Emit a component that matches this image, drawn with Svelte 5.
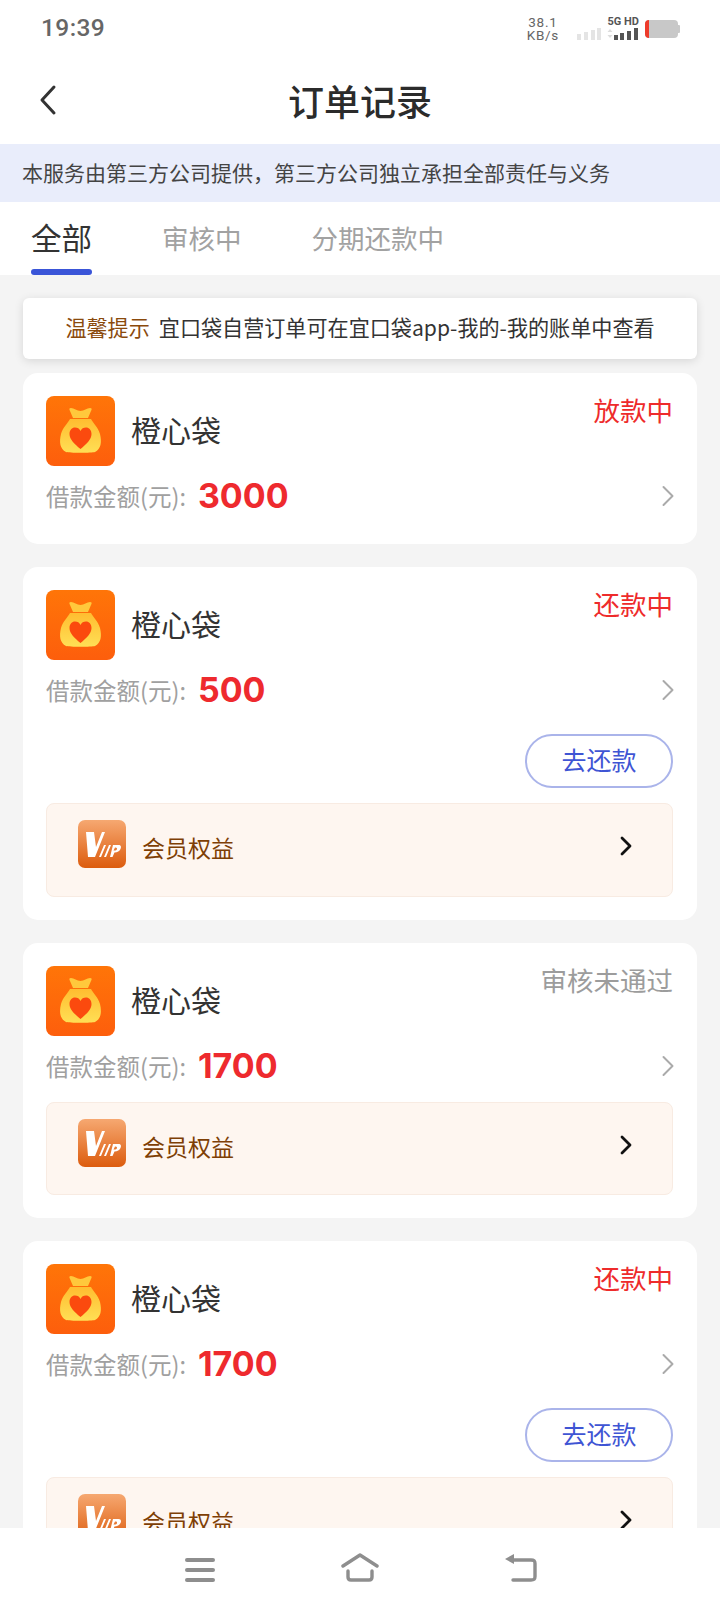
<script>
  const orders = [
    { amount: '3000', status: '放款中', statusClass: 'red', repay: false, vip: false },
    { amount: '500', status: '还款中', statusClass: 'red', repay: true, vip: true },
    { amount: '1700', status: '审核未通过', statusClass: 'gray', repay: false, vip: true },
    { amount: '1700', status: '还款中', statusClass: 'red', repay: true, vip: true }
  ];
</script>

<div class="page">
  <div class="statusbar">
    <span class="time">19:39</span>
    <div class="sys">
      <div class="speed"><span>38.1</span><span>KB/s</span></div>
      <svg class="signal" width="24" height="12" viewBox="0 0 24 12"><g fill="#e4e4e4"><rect x="0" y="6" width="4" height="6" /><rect x="7" y="4" width="4" height="8" /><rect x="14" y="2" width="4" height="10" /><rect x="20" y="0" width="4" height="12" /></g></svg>
      <div class="net">
        <span class="hd">5G HD</span>
        <svg width="32" height="12" viewBox="0 0 32 12"><g fill="#ddd"><path d="M3 1l2.500 3h-5zM3 10L.5 7h5z" /></g><g fill="#555"><rect x="7" y="7" width="4" height="5" /><rect x="13" y="5" width="4" height="7" /><rect x="20" y="3" width="4" height="9" /><rect x="27" y="0" width="4" height="12" /></g></svg>
      </div>
      <svg class="battery" width="35" height="18" viewBox="0 0 35 18"><rect x="0" y="0" width="33" height="18" rx="4" fill="#c8c8c8" /><path d="M4 0C1.500 0 0 1.500 0 4v10c0 2.500 1.500 4 4 4V0z" fill="#ee3b2b" /><rect x="32" y="5" width="3" height="8" rx="1" fill="#c8c8c8" /></svg>
    </div>
  </div>

  <header class="topbar">
    <svg class="back" width="20" height="32" viewBox="0 0 20 32"><path d="M16 3L4 16l12 13" fill="none" stroke="#333" stroke-width="3" stroke-linecap="round" stroke-linejoin="round" /></svg>
    <h1>订单记录</h1>
  </header>

  <div class="notice">本服务由第三方公司提供，第三方公司独立承担全部责任与义务</div>

  <nav class="tabs">
    <div class="tab active">全部</div>
    <div class="tab">审核中</div>
    <div class="tab">分期还款中</div>
  </nav>

  <main class="list">
    <div class="tip"><span class="tip-label">温馨提示</span>宜口袋自营订单可在宜口袋app-我的-我的账单中查看</div>

    {#each orders as order, i}
      <section class="card" class:first={i === 0}>
        <div class="card-head">
          <svg class="logo" width="69" height="70" viewBox="0 0 69 70">
            <defs>
              <linearGradient id="bg{i}" x1="0" y1="0" x2="0" y2="1"><stop offset="0" stop-color="#ff7508" /><stop offset="1" stop-color="#fd5e0c" /></linearGradient>
              <linearGradient id="bag{i}" x1="0" y1="0" x2="0" y2="1"><stop offset="0" stop-color="#ffbd30" /><stop offset="1" stop-color="#ffdf55" /></linearGradient>
            </defs>
            <rect width="69" height="70" rx="8" fill="url(#bg{i})" />
            <path d="M25 12c3 0 6 3 9.500 3s6.500-3 9.500-3c2 0 2 1 1 3l-3 7H27l-3-7c-1-2-1-3 1-3z" fill="#ffc83c" />
            <path d="M24 23h21c2 4 7 8 9 15 2 8 1 15-5 18-3 1-26 1-29 0-6-3-7-10-5-18 2-7 7-11 9-15z" fill="url(#bag{i})" />
            <path d="M34.500 53c-6-5-11-9.500-11-15 0-4 2.500-6.500 5.500-6.500 2.500 0 4.500 1 5.500 3.500 1-2.500 3-3.500 5.500-3.500 3 0 5.500 2.500 5.500 6.500 0 5.500-5 10-11 15z" fill="#fb4a0e" />
          </svg>
          <span class="name">橙心袋</span>
          <span class="status {order.statusClass}">{order.status}</span>
        </div>

        <div class="amount-row">
          <span class="label">借款金额(元):</span>
          <span class="amount">{order.amount}</span>
          <svg class="chev" width="14" height="22" viewBox="0 0 14 22"><path d="M2.500 2l9 9-9 9" fill="none" stroke="#aaa" stroke-width="2" stroke-linecap="round" stroke-linejoin="round" /></svg>
        </div>

        {#if order.repay}
          <div class="actions"><button class="repay">去还款</button></div>
        {/if}

        {#if order.vip}
          <div class="vip" class:tight={!order.repay}>
            <svg class="vip-icon" width="48" height="48" viewBox="0 0 48 48">
              <defs>
                <linearGradient id="vip{i}" x1="0" y1="0" x2="0" y2="1"><stop offset="0" stop-color="#f6a871" /><stop offset="1" stop-color="#dc5c0e" /></linearGradient>
              </defs>
              <rect width="48" height="48" rx="7" fill="url(#vip{i})" />
              <path d="M8 12h8l2 15 6-15h3L17 37h-7z" fill="#fff" />
              <path d="M26 25h2l-5 12h-2zM31 25h2l-5 12h-2z" fill="#fff" />
              <path d="M35 25h5.500c2.500 0 3 2 2 4s-3 3.500-6 3.500L34.500 37h-2.500zM37 27.500l-1.500 3h2c1.500 0 2.500-3 0-3z" fill="#fff" fill-rule="evenodd" />
            </svg>
            <span class="vip-text">会员权益</span>
            <svg class="vip-chev" width="12" height="20" viewBox="0 0 12 20"><path d="M2 2l8 8-8 8" fill="none" stroke="#111" stroke-width="2.800" stroke-linecap="round" stroke-linejoin="round" /></svg>
          </div>
        {/if}
      </section>
    {/each}
  </main>

  <footer class="navbar">
    <svg width="30" height="24" viewBox="0 0 30 24"><g fill="#8e8e8e"><rect x="0" y="0" width="30" height="4" rx="2" /><rect x="0" y="10" width="30" height="4" rx="2" /><rect x="0" y="20" width="30" height="4" rx="2" /></g></svg>
    <svg width="38" height="29" viewBox="0 0 38 29"><path d="M2 13L19 2l17 11M7 18v6c0 2 1 3 3 3h18c2 0 3-1 3-3v-6" fill="none" stroke="#8e8e8e" stroke-width="3.400" stroke-linecap="round" stroke-linejoin="round" /></svg>
    <svg width="32" height="28" viewBox="0 0 32 28"><path d="M8 6h18c3 0 4 1 4 3.500v13c0 2.500-1 3.500-4 3.500H8" fill="none" stroke="#8e8e8e" stroke-width="3.400" stroke-linecap="round" /><path d="M0 5l9-5v10z" fill="#8e8e8e" /></svg>
  </footer>
</div>

<style>
  :global(body) {
    margin: 0;
    background: #fff;
  }

  .page {
    width: 720px;
    height: 1612px;
    display: flex;
    flex-direction: column;
    overflow: hidden;
    font-family: "Noto Sans CJK SC", "Noto Sans", sans-serif;
    background: #f4f4f4;
  }

  .statusbar {
    height: 56px;
    flex: none;
    background: #fff;
    display: flex;
    justify-content: space-between;
    padding: 0 40px 0 41px;
    box-sizing: border-box;
  }

  .time {
    font: 500 24.500px/55px Roboto, sans-serif;
    color: #666;
    letter-spacing: 0.4px;
  }

  .sys {
    display: flex;
    align-items: flex-start;
    padding-top: 16px;
    color: #666;
  }

  .speed {
    display: flex;
    flex-direction: column;
    align-items: center;
    font: 400 13.500px/13px Roboto, sans-serif;
    letter-spacing: 0.7px;
    margin-right: 18px;
  }

  .signal {
    margin-top: 12px;
    margin-right: 6px;
  }

  .net {
    display: flex;
    flex-direction: column;
    align-items: flex-end;
    margin-right: 6px;
  }

  .hd {
    font: 700 11px/12px Roboto, sans-serif;
    color: #555;
  }

  .battery {
    margin-top: 4px;
  }

  .topbar {
    height: 88px;
    flex: none;
    background: #fff;
    position: relative;
    display: flex;
    align-items: center;
    justify-content: center;
  }

  .back {
    position: absolute;
    left: 38px;
    top: 28px;
  }

  .topbar h1 {
    margin: 0;
    font-size: 36px;
    font-weight: 500;
    color: #2b2b2b;
    line-height: 86px;
  }

  .notice {
    height: 58px;
    flex: none;
    background: #e9edfb;
    color: #444;
    font-size: 21px;
    line-height: 56px;
    padding-left: 22px;
  }

  .tabs {
    height: 73px;
    flex: none;
    background: #fff;
    display: flex;
    padding-left: 31px;
    gap: 70px;
  }

  .tab {
    position: relative;
    font-size: 26.500px;
    line-height: 72px;
    color: #a2a2a2;
  }

  .tab.active {
    font-size: 30.500px;
    color: #333;
    line-height: 70px;
  }

  .tab.active::after {
    content: "";
    position: absolute;
    left: 0;
    right: 0;
    bottom: 0;
    height: 6px;
    border-radius: 3px;
    background: #3a55d8;
  }

  .list {
    flex: 1;
    min-height: 0;
    overflow: hidden;
    padding: 23px 23px 0;
  }

  .tip {
    height: 61px;
    background: #fff;
    border-radius: 6px;
    box-shadow: 0 2px 10px rgba(0, 0, 0, 0.12);
    text-align: center;
    font-size: 21.100px;
    line-height: 59px;
    color: #333;
    margin-bottom: 14px;
  }

  .tip-label {
    color: #8a4a0c;
    margin-right: 9px;
  }

  .card {
    background: #fff;
    border-radius: 15px;
    padding: 23px 24px 23px 23px;
    margin-bottom: 23px;
  }

  .card.first {
    padding-bottom: 24px;
  }

  .card-head {
    display: flex;
    align-items: flex-start;
    height: 70px;
  }

  .logo {
    flex: none;
  }

  .name {
    font-size: 30px;
    line-height: 66px;
    color: #333;
    margin-left: 16px;
  }

  .status {
    margin-left: auto;
    font-size: 26.500px;
    line-height: 32px;
    margin-top: -2px;
  }

  .red {
    color: #ee2b2b;
  }

  .gray {
    color: #9c9c9c;
  }

  .amount-row {
    display: flex;
    align-items: center;
    height: 48px;
    margin-top: 6px;
  }

  .label {
    font-size: 23.500px;
    color: #a0a0a0;
  }

  .amount {
    font: 700 34px/48px Inter, sans-serif;
    color: #ee2a2e;
    margin-left: 12px;
  }

  .chev {
    margin-left: auto;
    margin-right: -2px;
  }

  .actions {
    display: flex;
    justify-content: flex-end;
    margin-top: 20px;
  }

  .repay {
    width: 148px;
    height: 54px;
    border: 2px solid #aab4ea;
    border-radius: 27px;
    background: #fff;
    color: #3f55d4;
    font: 400 25px/46px "Noto Sans CJK SC", sans-serif;
    padding: 0 0 4px;
  }

  .vip {
    position: relative;
    height: 94px;
    box-sizing: border-box;
    margin-top: 15px;
    background: #fef6f0;
    border: 1px solid #f8ebe2;
    border-radius: 8px;
    display: flex;
    align-items: flex-start;
    padding: 16px 0 0 31px;
  }

  .vip.tight {
    height: 93px;
    margin-top: 12px;
  }

  .vip-text {
    font-size: 23px;
    line-height: 54px;
    color: #7e3f05;
    margin-left: 16px;
  }

  .vip-chev {
    position: absolute;
    right: 40px;
    top: 32px;
  }

  .navbar {
    height: 84px;
    flex: none;
    background: #fff;
    display: flex;
    align-items: flex-end;
    gap: 126px;
    padding: 0 0 30px 185px;
    box-sizing: border-box;
  }
</style>
